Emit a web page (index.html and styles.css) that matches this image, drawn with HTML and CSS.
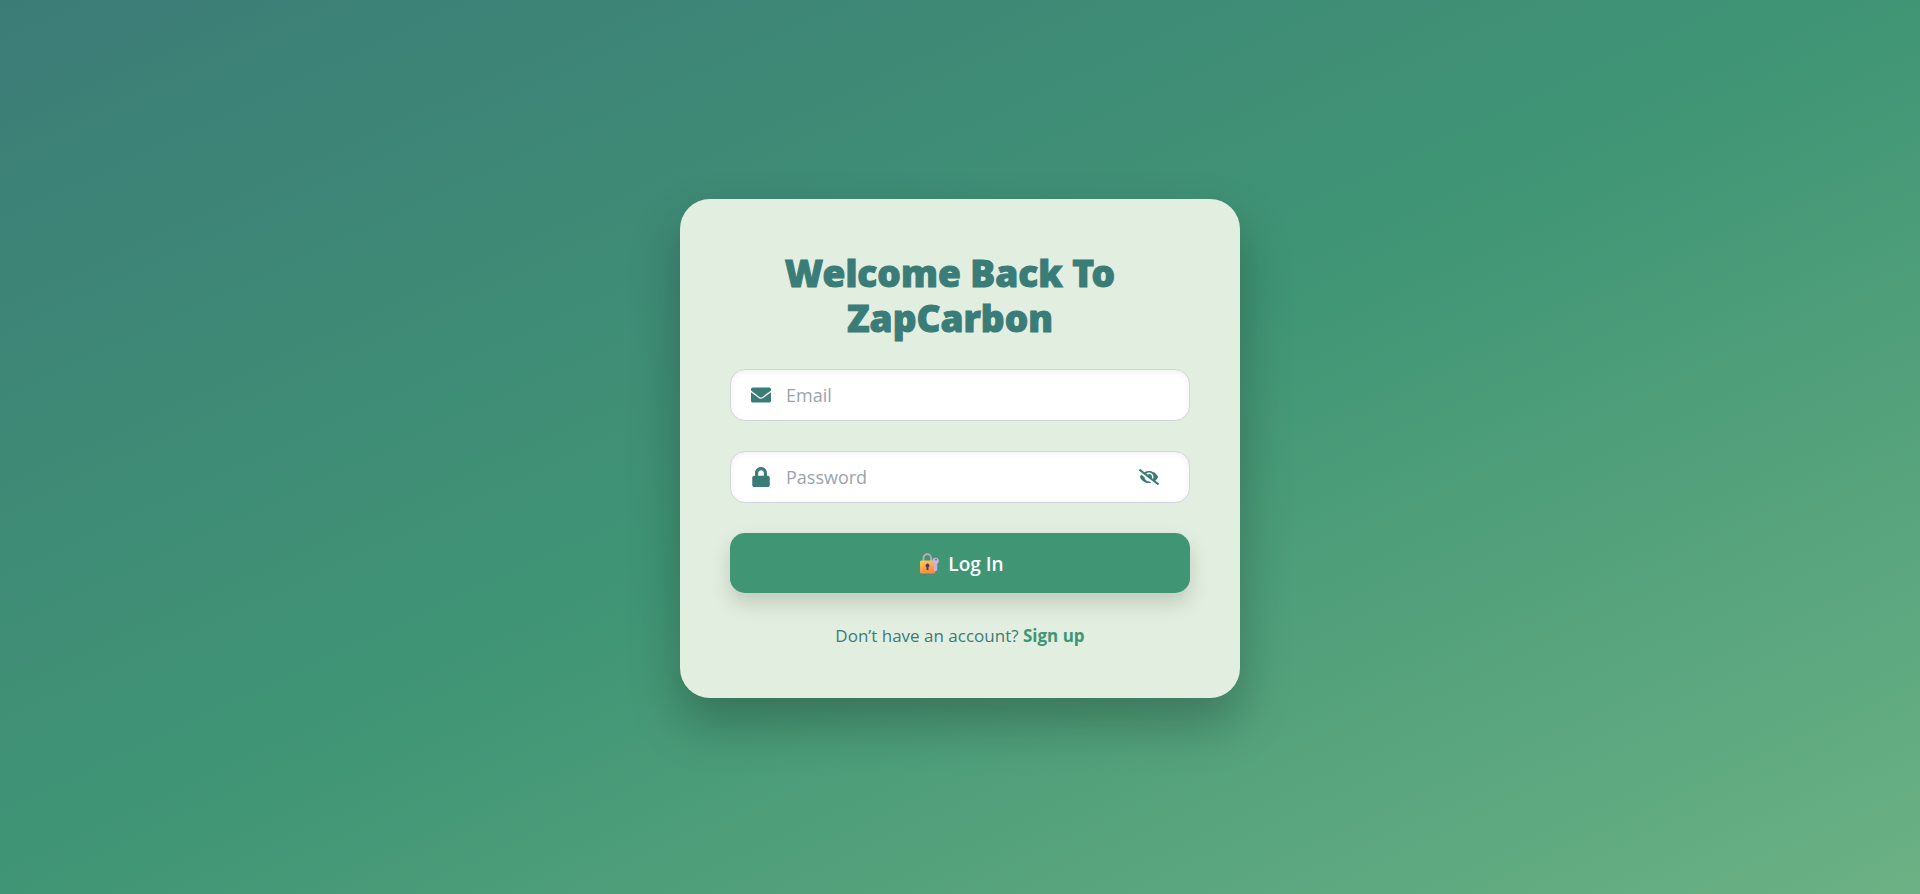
FILE: index.html
```html
<!DOCTYPE html>
<html lang="en">
<head>
<meta charset="utf-8">
<meta name="viewport" content="width=device-width, initial-scale=1">
<title>ZapCarbon – Log In</title>
<link rel="stylesheet" href="styles.css">
</head>
<body class="page">
<main class="card">
  <h1 class="title">Welcome Back To ZapCarbon</h1>
  <form class="form">
    <div class="field">
      <label class="field-icon" for="email" aria-label="Email">
        <svg class="icon" viewBox="0 0 512 512" aria-hidden="true"><path d="M502.3 190.8c3.900-3.100 9.700-.2 9.700 4.700V400c0 26.500-21.500 48-48 48H48c-26.500 0-48-21.500-48-48V195.600c0-5 5.700-7.800 9.700-4.700 22.400 17.400 52.100 39.500 154.100 113.600 21.100 15.400 56.700 47.800 92.200 47.600 35.700.3 72-32.800 92.300-47.600 102-74.100 131.600-96.300 154-113.700zM256 320c23.200.4 56.600-29.200 73.400-41.400 132.700-96.300 142.800-104.700 173.400-128.700 5.800-4.500 9.200-11.500 9.200-18.900v-19c0-26.500-21.500-48-48-48H48c-26.500 0-48 21.500-48 48v19c0 7.400 3.400 14.300 9.200 18.900 30.600 23.900 40.700 32.400 173.400 128.700 16.800 12.200 50.200 41.800 73.400 41.400z"/></svg>
      </label>
      <input class="input" id="email" type="email" placeholder="Email">
    </div>
    <div class="field">
      <label class="field-icon" for="password" aria-label="Password">
        <svg class="icon" viewBox="-32 0 512 512" aria-hidden="true"><path d="M400 224h-24v-72C376 68.200 307.800 0 224 0S72 68.200 72 152v72H48c-26.500 0-48 21.500-48 48v192c0 26.500 21.500 48 48 48h352c26.500 0 48-21.500 48-48V272c0-26.500-21.500-48-48-48zm-104 0H152v-72c0-39.700 32.300-72 72-72s72 32.300 72 72v72z"/></svg>
      </label>
      <input class="input" id="password" type="password" placeholder="Password">
      <button class="toggle" type="button" aria-label="Show password">
        <svg class="icon" viewBox="0 0 640 512" aria-hidden="true"><path d="M320 400c-75.850 0-137.250-58.710-142.900-133.110L72.200 185.820c-13.790 17.300-26.480 35.590-36.720 55.590a32.350 32.350 0 0 0 0 29.190C89.710 376.410 197.070 448 320 448c26.910 0 52.870-4 77.890-10.460L346 397.390a144.130 144.130 0 0 1-26 2.610zm313.820 58.100l-110.550-85.440a331.250 331.250 0 0 0 81.250-102.070 32.350 32.350 0 0 0 0-29.190C550.290 135.590 442.930 64 320 64a308.150 308.150 0 0 0-147.320 37.700L45.460 3.370A16 16 0 0 0 23 6.180L3.370 31.450A16 16 0 0 0 6.180 53.900l588.360 454.730a16 16 0 0 0 22.460-2.810l19.640-25.270a16 16 0 0 0-2.820-22.450zm-183.720-142l-39.300-30.380A94.750 94.750 0 0 0 416 256a94.760 94.760 0 0 0-121.310-92.210A47.650 47.650 0 0 1 304 192a46.640 46.640 0 0 1-1.540 10l-73.610-56.890A142.310 142.310 0 0 1 320 112a143.920 143.920 0 0 1 144 144c0 21.630-5.290 41.790-13.900 60.110z"/></svg>
      </button>
    </div>
    <button class="submit" type="submit">
      <svg class="lock-key" viewBox="0 0 24 24" aria-hidden="true">
        <defs><linearGradient id="body" x1="0" y1="0" x2="0.400" y2="1"><stop offset="0" stop-color="#ffd04e"/><stop offset="1" stop-color="#fb8a44"/></linearGradient></defs>
        <path d="M7.500 9.500V6a3.800 3.800 0 0 1 7.600 0V9.500" fill="none" stroke="#b9acc4" stroke-width="1.800"/>
        <rect x="4" y="8.500" width="15" height="13" rx="1.500" fill="url(#body)"/>
        <path d="M11.500 11.500a2 2 0 0 1 1 3.700V18h-2v-2.800a2 2 0 0 1 1-3.700z" fill="#503a56"/>
        <path d="M19.700 5.500a3.500 3.500 0 0 1 1.500 6.500v6l-1.700 1.500-1.700-1.500V12a3.500 3.500 0 0 1 1.900-6.500z" fill="#c6b5db"/>
        <circle cx="20" cy="7.500" r="0.900" fill="#7d6296"/>
      </svg>
      Log In
    </button>
  </form>
  <p class="footer">Don’t have an account? <a class="link" href="#signup">Sign up</a></p>
</main>
</body>
</html>
```
FILE: styles.css
```css
* { box-sizing: border-box; }

.page {
  margin: 0;
  min-height: 100vh;
  display: flex;
  align-items: center;
  justify-content: center;
  padding: 20px;
  background: linear-gradient(155deg, #3c7c77 0%, #409575 50%, #6bb184 100%);
  font-family: "Open Sans", "Noto Sans", sans-serif;
  color: #3a7c77;
}

.card {
  width: 100%;
  max-width: 560px;
  padding: 50px;
  margin-top: 3px;
  border-radius: 30px;
  background: #e2eee0;
  box-shadow: 0 25px 50px rgba(0, 0, 0, 0.25);
}

.title {
  margin: 0;
  padding: 1px 20px 29px 0;
  font-family: "Noto Sans", "Open Sans", sans-serif;
  font-size: 37px;
  font-weight: 900;
  line-height: 45px;
  text-align: center;
  -webkit-text-stroke: 1px #3a7c77;
}

.form {
  display: flex;
  flex-direction: column;
  gap: 30px;
}

.field {
  display: flex;
  align-items: center;
  height: 52px;
  padding: 0 20px;
  border: 1px solid #d1d5db;
  border-radius: 15px;
  background: #fff;
  box-shadow: inset 0 2px 6px rgba(0, 0, 0, 0.06);
}

.field-icon { display: flex; }

.icon {
  display: block;
  width: 20px;
  height: 20px;
  fill: #3a7c77;
}

.input {
  flex: 1;
  min-width: 0;
  height: 100%;
  padding: 0 15px;
  border: 0;
  outline: 0;
  background: none;
  font: inherit;
  font-size: 18px;
  color: #3a7c77;
}

.input::placeholder { color: #9ca3af; opacity: 1; }

.toggle {
  display: flex;
  padding: 0 10px;
  border: 0;
  background: none;
  cursor: pointer;
}

.submit {
  display: flex;
  align-items: center;
  justify-content: center;
  gap: 8px;
  height: 60px;
  padding-top: 2px;
  border: 0;
  border-radius: 15px;
  background: #409575;
  box-shadow: 0 10px 20px rgba(0, 0, 0, 0.15);
  color: #fff;
  font: inherit;
  font-size: 19px;
  font-weight: 600;
  cursor: pointer;
}

.lock-key { width: 24px; height: 24px; }

.footer {
  margin: 31px 0 0;
  font-size: 17px;
  line-height: 24px;
  text-align: center;
}

.link {
  color: #409575;
  font-weight: 700;
  text-decoration: none;
}
```
